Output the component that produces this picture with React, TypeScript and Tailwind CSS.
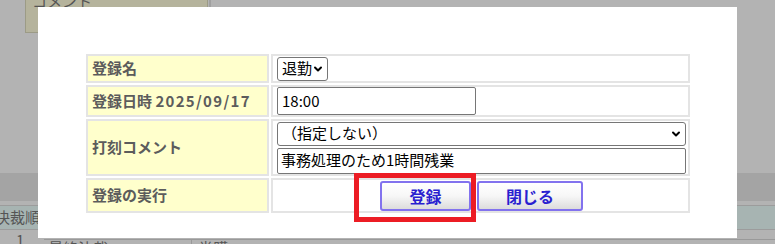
import { ChevronDown } from 'lucide-react'

const labelCls =
  "w-[183px] border-2 border-[#e4e4e4] bg-[#ffffcc] pl-[4px] text-[15px] font-bold text-[#5c5c5c] align-middle"
const valueCls = "border-2 border-[#e4e4e4] bg-white px-[4px] align-middle"

function FakeSelect({ text, className }: { text: string; className: string }) {
  return (
    <div className={`flex items-center justify-between whitespace-nowrap rounded-[3px] border border-[#767676] bg-white pl-[4px] pr-[3px] text-[15px] text-black ${className}`}>
      <span>{text}</span>
      <ChevronDown className="h-[12px] w-[12px] shrink-0" strokeWidth={4} />
    </div>
  )
}

function DlgButton({ label, w }: { label: string; w: string }) {
  return (
    <button
      className={`${w} h-[30px] rounded-[3px] border-2 border-[#8272ee] bg-gradient-to-b from-white via-[#f7f7f7] to-[#dcdcdc] text-[16px] font-bold text-[#2a1fd0]`}
    >
      {label}
    </button>
  )
}

export default function App() {
  return (
    <div className="relative h-[244px] w-[775px] overflow-hidden bg-[#b3b3b3] font-['Noto_Sans_CJK_JP','Noto_Sans',sans-serif]">
      {/* page underneath the modal */}
      <div className="flex flex-col">
        <div className="flex h-[34px]">
          <div className="ml-[25px] h-[34px] w-[183px] border border-[#9c9b86] bg-[#b5b39c] pl-[6px] text-[15px] leading-[10px] text-[#555] -mt-[1px]">
            <span className="relative -top-[4px]">コメント</span>
          </div>
          <div className="ml-[1px] h-[34px] w-[2px] bg-[#a0a0a0]" />
        </div>
        <div className="h-[139px]" />
        <div className="h-[28px] bg-[#a4a4a4]" />
        <div className="h-[4px]" />
        <div className="flex h-[25px] items-center border-y border-[#9c9c9c] bg-[#a7b4b2] pl-0 text-[15px] text-[#555]">
          <span className="-ml-[5px]">決裁順</span>
        </div>
        <div className="flex h-[15px] items-start text-[15px] leading-[20px] text-[#555]">
          <span className="ml-[16px] w-[30px]">1</span>
          <div className="mt-[9px] flex w-full border-t border-[#999] leading-[16px]">
            <span className="ml-[4px] w-[143px]">最終決裁</span>
            <span className="border-l border-[#999] pl-[6px]">當購</span>
          </div>
        </div>
      </div>

      {/* modal dialog */}
      <div className="absolute left-[38px] top-[7px] h-[231px] w-[699px] bg-white pl-[46px] pt-[45px]">
        <table className="w-[608px] table-fixed border-separate border-spacing-[2px]">
          <tbody>
            <tr>
              <td className={`${labelCls} h-[29px]`}>登録名</td>
              <td className={valueCls}>
                <FakeSelect text="退勤" className="h-[24px] w-[51px]" />
              </td>
            </tr>
            <tr>
              <td className={`${labelCls} h-[32px]`}>
                登録日時 <span className="tracking-[1.3px]">2025/09/17</span>
              </td>
              <td className={valueCls}>
                <div className="flex h-[28px] w-[199px] items-center rounded-[2px] border border-[#767676] pl-[4px] text-[15px] text-black">
                  18:00
                </div>
              </td>
            </tr>
            <tr>
              <td className={`${labelCls} h-[57px]`}>打刻コメント</td>
              <td className={`${valueCls} pr-[2px]`}>
                <div className="flex flex-col gap-[2px]">
                  <FakeSelect text="（指定しない）" className="h-[24px] w-full" />
                  <div className="flex h-[26px] w-full items-center rounded-[2px] border border-[#767676] pl-[3px] text-[15px] text-black">
                    事務処理のため1時間残業
                  </div>
                </div>
              </td>
            </tr>
            <tr>
              <td className={`${labelCls} h-[35px]`}>登録の実行</td>
              <td className={valueCls}>
                <div className="flex justify-center gap-[6px] pl-[2px]">
                  <DlgButton label="登録" w="w-[91px]" />
                  <DlgButton label="閉じる" w="w-[106px]" />
                </div>
              </td>
            </tr>
          </tbody>
        </table>

        {/* red highlight annotation */}
        <div className="absolute left-[316px] top-[166px] h-[49px] w-[122px] border-[5px] border-[#ec1c24]" />
      </div>
    </div>
  )
}
